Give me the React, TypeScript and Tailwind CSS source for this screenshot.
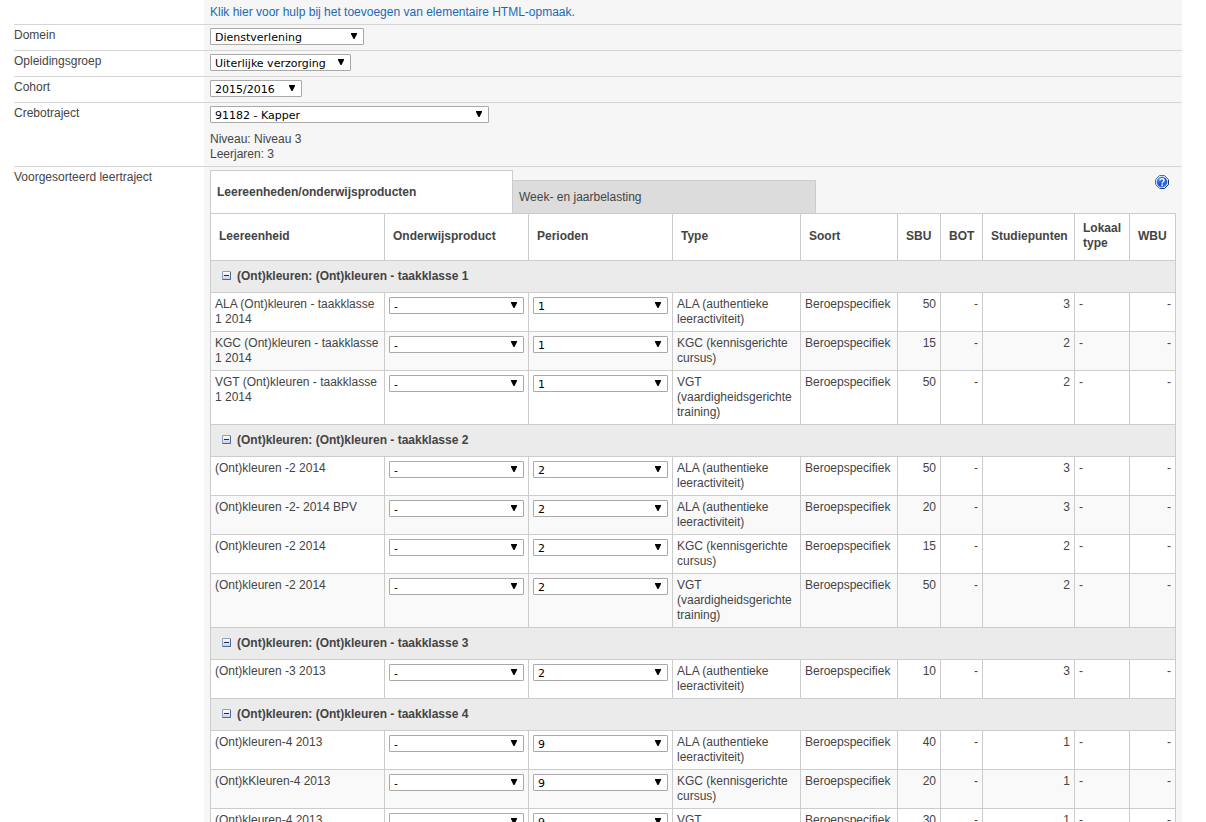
import { ReactNode } from "react";

type SelectProps = { id?: string; label?: string; value: string; className: string };

function Select({ id, label, value, className }: SelectProps) {
  return (
    <div className={`relative h-[17px] ${className}`}>
      <select
        id={id}
        aria-label={label}
        defaultValue={value}
        className="block h-[17px] w-full appearance-none rounded-[1px] border border-[#a9a9a9] bg-white pt-0.5 pl-1 font-['DejaVu_Sans',sans-serif] text-[11px] leading-[14px] text-black"
      >
        <option value={value}>{value}</option>
      </select>
      <svg className="pointer-events-none absolute top-[5px] right-[7px]" width="6" height="6" viewBox="0 0 6 6" aria-hidden="true">
        <path d="M0 0H6V1L3.5 6H2.5L0 1Z" fill="#000" />
      </svg>
    </div>
  );
}

function FormRow({ label, htmlFor, children }: { label?: string; htmlFor?: string; children: ReactNode }) {
  return (
    <div className="grid grid-cols-[190px_minmax(0,1fr)] border-b border-[#d5d5d5]">
      <div className="pt-[3px]">{label && <label htmlFor={htmlFor}>{label}</label>}</div>
      <div className="bg-[#f6f6f6] px-1.5 pt-[3px] pb-1">
        <div className="pb-px">{children}</div>
      </div>
    </div>
  );
}

function CollapseIcon() {
  return (
    <svg className="mb-0.5" width="9" height="9" viewBox="0 0 9 9" aria-hidden="true">
      <defs>
        <linearGradient id="box" x1="0" y1="0" x2="0" y2="1">
          <stop offset="0" stopColor="#fff" />
          <stop offset="1" stopColor="#c3cfe2" />
        </linearGradient>
      </defs>
      <rect x="0.5" y="0.5" width="8" height="8" rx="0.5" fill="url(#box)" stroke="#8d9dbb" />
      <path d="M0.5 8.5H8.5V1" fill="none" stroke="#4c6793" />
      <path d="M2 4.5H7" stroke="#1c2f55" />
    </svg>
  );
}

function HelpIcon() {
  return (
    <svg width="14" height="14" viewBox="0 0 14 14" aria-hidden="true">
      <defs>
        <linearGradient id="ball" x1="0" y1="0" x2="1" y2="1">
          <stop offset="0" stopColor="#6d9cf0" />
          <stop offset="0.5" stopColor="#1c50d8" />
          <stop offset="1" stopColor="#3b8af5" />
        </linearGradient>
      </defs>
      <path d="M4.5 0.5H9.5L13.5 4.5V9.5L9.5 13.5H4.5L0.5 9.5V4.5Z" fill="#d9e8fb" stroke="#3f74ae" />
      <path d="M13.5 5V9.5L9.5 13.5H5" fill="none" stroke="#123f70" />
      <circle cx="7" cy="7" r="5.3" fill="url(#ball)" />
      <path d="M5 5.4C5 3.2 9 3.2 9 5.4C9 6.8 7.1 6.7 7.1 8.4" fill="none" stroke="#fff" strokeWidth="1.5" />
      <rect x="6.3" y="9.4" width="1.6" height="1.6" fill="#fff" />
    </svg>
  );
}

type Item = { name: string; period: string; type: string; sbu: number; points: number };

const ALA = "ALA (authentieke leeractiviteit)";
const KGC = "KGC (kennisgerichte cursus)";
const VGT = "VGT (vaardigheidsgerichte training)";

const groups: { title: string; items: Item[] }[] = [
  {
    title: "(Ont)kleuren: (Ont)kleuren - taakklasse 1",
    items: [
      { name: "ALA (Ont)kleuren - taakklasse 1 2014", period: "1", type: ALA, sbu: 50, points: 3 },
      { name: "KGC (Ont)kleuren - taakklasse 1 2014", period: "1", type: KGC, sbu: 15, points: 2 },
      { name: "VGT (Ont)kleuren - taakklasse 1 2014", period: "1", type: VGT, sbu: 50, points: 2 },
    ],
  },
  {
    title: "(Ont)kleuren: (Ont)kleuren - taakklasse 2",
    items: [
      { name: "(Ont)kleuren -2 2014", period: "2", type: ALA, sbu: 50, points: 3 },
      { name: "(Ont)kleuren -2- 2014 BPV", period: "2", type: ALA, sbu: 20, points: 3 },
      { name: "(Ont)kleuren -2 2014", period: "2", type: KGC, sbu: 15, points: 2 },
      { name: "(Ont)kleuren -2 2014", period: "2", type: VGT, sbu: 50, points: 2 },
    ],
  },
  {
    title: "(Ont)kleuren: (Ont)kleuren - taakklasse 3",
    items: [{ name: "(Ont)kleuren -3 2013", period: "2", type: ALA, sbu: 10, points: 3 }],
  },
  {
    title: "(Ont)kleuren: (Ont)kleuren - taakklasse 4",
    items: [
      { name: "(Ont)kleuren-4 2013", period: "9", type: ALA, sbu: 40, points: 1 },
      { name: "(Ont)kKleuren-4 2013", period: "9", type: KGC, sbu: 20, points: 1 },
      { name: "(Ont)kleuren-4 2013", period: "9", type: VGT, sbu: 30, points: 1 },
    ],
  },
];

const columns = [
  { title: "Leereenheid", width: "w-[174px]" },
  { title: "Onderwijsproduct", width: "w-[144px]" },
  { title: "Perioden", width: "w-[144px]" },
  { title: "Type", width: "w-[128px]" },
  { title: "Soort", width: "w-[97px]" },
  { title: "SBU", width: "w-[43px]" },
  { title: "BOT", width: "w-[42px]" },
  { title: "Studiepunten", width: "w-[92px]" },
  { title: "Lokaal type", width: "w-[55px]" },
  { title: "WBU", width: "w-[46px]" },
];

const cell = "border-r border-b border-[#ccc] p-1 align-top";

function UnitTable() {
  return (
    <table className="w-full table-fixed border-separate border-spacing-0 border-t border-l border-[#ccc] bg-white">
      <thead>
        <tr>
          {columns.map((c) => (
            <th key={c.title} scope="col" className={`h-[47px] border-r border-b border-[#ccc] pr-0 pb-0.5 pl-2 text-left font-bold ${c.width}`}>
              {c.title}
            </th>
          ))}
        </tr>
      </thead>
      {groups.map((g) => (
        <tbody key={g.title}>
          <tr>
            <th scope="rowgroup" colSpan={10} className="h-8 border-r border-b border-[#ccc] bg-[#ebebeb] px-[11px] text-left font-bold">
              <button type="button" className="flex items-center gap-1.5">
                <CollapseIcon />
                <span>{g.title}</span>
              </button>
            </th>
          </tr>
          {g.items.map((item, i) => (
            <tr key={i} className={i % 2 ? "bg-[#f9f9f9]" : "bg-white"}>
              <td className={cell}>{item.name}</td>
              <td className={cell}>
                <Select label={`Onderwijsproduct ${item.name}`} value="-" className="w-full" />
              </td>
              <td className={cell}>
                <Select label={`Perioden ${item.name}`} value={item.period} className="w-full" />
              </td>
              <td className={cell}>{item.type}</td>
              <td className={cell}>Beroepspecifiek</td>
              <td className={`${cell} text-right`}>{item.sbu}</td>
              <td className={`${cell} text-right`}>-</td>
              <td className={`${cell} text-right`}>{item.points}</td>
              <td className={cell}>-</td>
              <td className={`${cell} text-right`}>-</td>
            </tr>
          ))}
        </tbody>
      ))}
    </table>
  );
}

export default function App() {
  return (
    <main className="min-h-screen bg-white pr-6 pl-3.5 font-['Liberation_Sans',Arial,sans-serif] text-[12px] leading-[15px] text-[#444]">
      <div className="grid grid-cols-[190px_minmax(0,1fr)] border-b border-[#d5d5d5]">
        <div />
        <div className="bg-[#f6f6f6] px-1.5 py-[5px] pb-1">
          <a href="#help" className="block text-[#1a6ab3]">
            Klik hier voor hulp bij het toevoegen van elementaire HTML-opmaak.
          </a>
        </div>
      </div>
      <FormRow label="Domein" htmlFor="domein">
        <Select id="domein" value="Dienstverlening" className="w-[154px]" />
      </FormRow>
      <FormRow label="Opleidingsgroep" htmlFor="groep">
        <Select id="groep" value="Uiterlijke verzorging" className="w-[141px]" />
      </FormRow>
      <FormRow label="Cohort" htmlFor="cohort">
        <Select id="cohort" value="2015/2016" className="w-[92px]" />
      </FormRow>
      <div className="grid grid-cols-[190px_minmax(0,1fr)] border-b border-[#d5d5d5]">
        <div className="pt-[3px]">
          <label htmlFor="crebo">Crebotraject</label>
        </div>
        <div className="bg-[#f6f6f6] px-1.5 pt-[3px] pb-1">
          <Select id="crebo" value="91182 - Kapper" className="w-[279px]" />
          <p className="pt-[9px]">
            Niveau: Niveau 3<br />
            Leerjaren: 3
          </p>
        </div>
      </div>
      <div className="grid grid-cols-[190px_minmax(0,1fr)]">
        <h2 className="pt-[3px]">Voorgesorteerd leertraject</h2>
        <div className="bg-[#f6f6f6] px-1.5 pt-[3px]">
          <div className="flex items-end">
            <button type="button" className="h-[43px] w-[303px] border border-b-0 border-[#ccc] bg-white px-1.5 text-left font-bold">
              Leereenheden/onderwijsproducten
            </button>
            <button type="button" className="h-[33px] w-[303px] border border-b-0 border-l-0 border-[#ccc] bg-[#dcdcdc] px-1.5 text-left">
              Week- en jaarbelasting
            </button>
            <button type="button" aria-label="Help" className="mt-[5px] mr-[7px] ml-auto self-start">
              <HelpIcon />
            </button>
          </div>
          <UnitTable />
        </div>
      </div>
    </main>
  );
}
